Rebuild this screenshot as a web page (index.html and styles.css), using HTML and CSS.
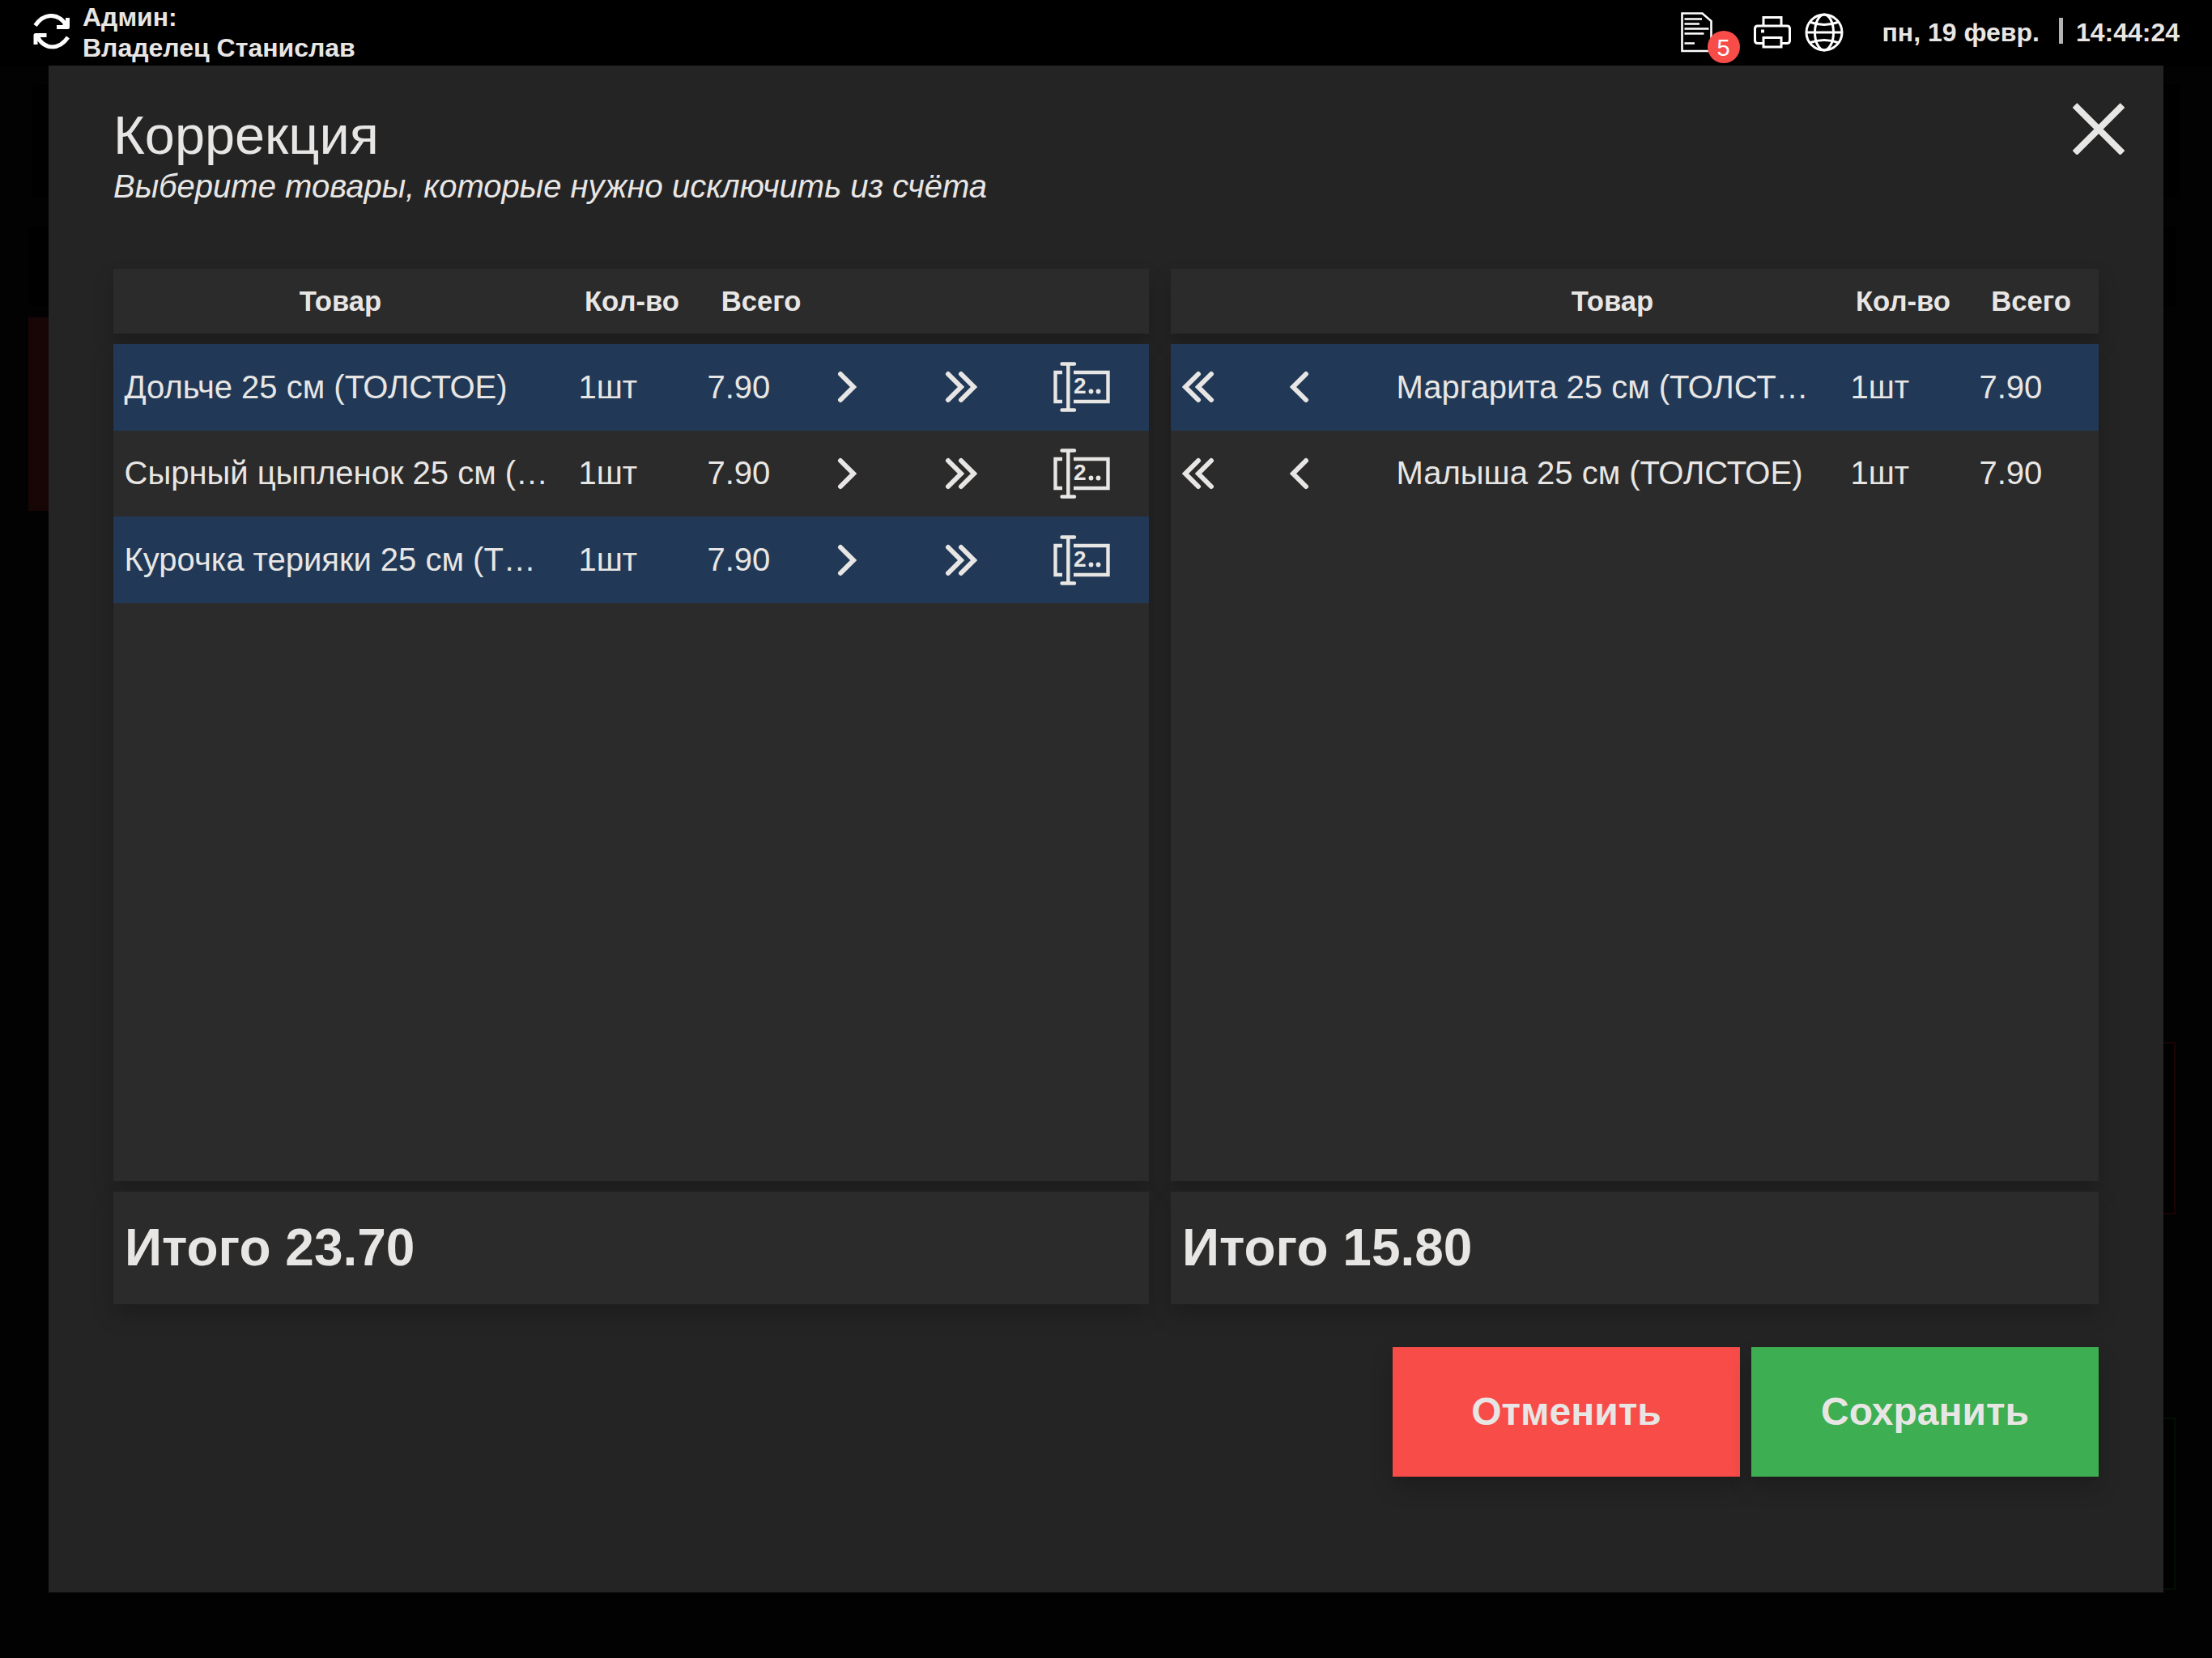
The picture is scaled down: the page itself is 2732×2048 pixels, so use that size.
FILE: index.html
```html
<!DOCTYPE html>
<html lang="ru">
<head>
  <meta charset="UTF-8">
  <meta name="viewport" content="width=device-width, initial-scale=1.0">
  <title>Коррекция</title>
  <link rel="stylesheet" href="styles.css">
</head>
<body>
  <svg class="sprite">
    <symbol id="next" viewBox="0 0 24 40"><path d="M4 4 L20 20 L4 36"/></symbol>
    <symbol id="nextAll" viewBox="0 0 40 40"><path d="M4 4 L20 20 L4 36 M20 4 L36 20 L20 36"/></symbol>
    <symbol id="prev" viewBox="0 0 24 40"><path d="M20 4 L4 20 L20 36"/></symbol>
    <symbol id="prevAll" viewBox="0 0 40 40"><path d="M20 4 L4 20 L20 36 M36 4 L20 20 L36 36"/></symbol>
    <symbol id="edit" viewBox="0 0 72 64">
      <path d="M12 14 H3.5 V50 H12 M26 14 H68.5 V50 H26" stroke-width="4.4" stroke-linecap="butt"/>
      <path d="M11.5 3.5 H27 M11.5 60.5 H27 M19.3 3.5 V60.5" stroke-width="4.4"/>
      <text x="26" y="40">2</text>
      <circle cx="47.5" cy="37.5" r="2.9"/>
      <circle cx="56.5" cy="37.5" r="2.9"/>
    </symbol>
  </svg>

  <header class="topbar">
    <svg class="sync" viewBox="0 0 46 44">
      <path d="M3.5 14.5 C14 -1 31 -2 42 14 M44 29 C33 45 15 45 6 28"/>
      <path d="M43.5 5 V16.5 H30 M4 38 V26.5 H17.5"/>
      <path class="fill" d="M35 16 L43 8 V16 Z M4 27 H12 L4 35 Z"/>
    </svg>
    <div class="user">Админ:<br>Владелец Станислав</div>
    <div class="status">
      <div class="docs">
        <svg viewBox="0 0 40 50">
          <path d="M1.5 1.5 H26.5 L37.5 11 V48 H1.5 Z" stroke-width="2.6"/>
          <path d="M4.5 8.5 H26 M4.5 14.5 H23 M4.5 20.5 H34.5 M4.5 26.5 H28.5 M4.5 38.5 H17" stroke-width="2.6"/>
        </svg>
        <span class="badge">5</span>
      </div>
      <svg class="printer" viewBox="0 0 46 40">
        <path d="M12 12 V1.5 H34 V12 M12 33.5 H5 Q1.5 33.5 1.5 30 V15.5 Q1.5 12 5 12 H41 Q44.5 12 44.5 15.5 V30 Q44.5 33.5 41 33.5 H34 M12 26.5 H34 V38 H12 Z"/>
        <path d="M9 18.5 H13" stroke-width="4"/>
      </svg>
      <svg class="globe" viewBox="0 0 48 48">
        <circle cx="24" cy="24" r="22"/>
        <ellipse cx="24" cy="24" rx="11.5" ry="22"/>
        <path d="M2 24 H46 M5.5 11 Q24 18 42.5 11 M5.5 37 Q24 30 42.5 37"/>
      </svg>
      <span class="date">пн, 19 февр.</span>
      <span class="divider"></span>
      <span class="time">14:44:24</span>
    </div>
  </header>

  <main class="screen">
    <div class="side side-left">
      <div class="block-field"></div>
      <div class="block-tab"></div>
      <div class="block-red"></div>
    </div>

    <section class="modal">
      <div class="modal-head">
        <div>
          <h1>Коррекция</h1>
          <p>Выберите товары, которые нужно исключить из счёта</p>
        </div>
        <svg class="close" viewBox="0 0 64 64"><path d="M2.5 3 L61.5 62 M61.5 3 L2.5 62"/></svg>
      </div>

      <div class="tables">
        <div class="table table-from">
          <div class="row thead">
            <span>Товар</span><span>Кол-во</span><span>Всего</span>
          </div>
          <div class="tbody">
            <div class="row">
              <span class="name">Дольче 25 см (ТОЛСТОЕ)</span><span>1шт</span><span>7.90</span>
              <span><svg class="arrow"><use href="#next"/></svg></span>
              <span><svg class="arrow-all"><use href="#nextAll"/></svg></span>
              <span><svg class="edit"><use href="#edit"/></svg></span>
            </div>
            <div class="row">
              <span class="name">Сырный цыпленок 25 см (…</span><span>1шт</span><span>7.90</span>
              <span><svg class="arrow"><use href="#next"/></svg></span>
              <span><svg class="arrow-all"><use href="#nextAll"/></svg></span>
              <span><svg class="edit"><use href="#edit"/></svg></span>
            </div>
            <div class="row">
              <span class="name">Курочка терияки 25 см (Т…</span><span>1шт</span><span>7.90</span>
              <span><svg class="arrow"><use href="#next"/></svg></span>
              <span><svg class="arrow-all"><use href="#nextAll"/></svg></span>
              <span><svg class="edit"><use href="#edit"/></svg></span>
            </div>
          </div>
          <div class="total">Итого 23.70</div>
        </div>

        <div class="table table-to">
          <div class="row thead">
            <span></span><span></span><span>Товар</span><span>Кол-во</span><span>Всего</span>
          </div>
          <div class="tbody">
            <div class="row">
              <span><svg class="arrow-all"><use href="#prevAll"/></svg></span>
              <span><svg class="arrow"><use href="#prev"/></svg></span>
              <span class="name">Маргарита 25 см (ТОЛСТ…</span><span>1шт</span><span>7.90</span>
            </div>
            <div class="row">
              <span><svg class="arrow-all"><use href="#prevAll"/></svg></span>
              <span><svg class="arrow"><use href="#prev"/></svg></span>
              <span class="name">Малыша 25 см (ТОЛСТОЕ)</span><span>1шт</span><span>7.90</span>
            </div>
          </div>
          <div class="total">Итого 15.80</div>
        </div>
      </div>

      <div class="buttons">
        <button class="cancel">Отменить</button>
        <button class="save">Сохранить</button>
      </div>
    </section>

    <div class="side side-right">
      <div class="block-field"></div>
      <div class="block-tab"></div>
      <div class="frame frame-red"></div>
      <div class="frame frame-green"></div>
    </div>
  </main>
</body>
</html>
```
FILE: styles.css
```css
* {
  box-sizing: border-box;
}
body {
  margin: 0;
  height: 2048px;
  overflow: hidden;
  background: #020202;
  color: #e8e6e4;
  font-family: "Liberation Sans", Arial, sans-serif;
}
svg {
  display: block;
  fill: none;
  stroke: #fff;
  stroke-width: 3;
}
.sprite {
  display: none;
}

/* top bar */
.topbar {
  display: flex;
  height: 81px;
  padding: 0 40px;
  background: #000;
  font-size: 32px;
  font-weight: bold;
}
.sync {
  width: 46px;
  height: 44px;
  margin-top: 17px;
  stroke-width: 5;
  stroke-linejoin: round;
}
.sync .fill {
  fill: #fff;
  stroke: none;
}
.user {
  margin: 2px 0 0 16px;
  line-height: 38px;
}
.status {
  display: flex;
  align-items: center;
  margin-left: auto;
}
.docs {
  position: relative;
  width: 40px;
  height: 50px;
  margin: 0 50px 2px 0;
}
.badge {
  position: absolute;
  left: 33px;
  top: 23px;
  width: 40px;
  height: 40px;
  border-radius: 50%;
  background: #f84c48;
  color: #fff;
  font-size: 29px;
  font-weight: normal;
  line-height: 42px;
  text-align: center;
}
.printer {
  width: 46px;
  height: 40px;
  margin: 0 17px 2px 0;
}
.globe {
  width: 48px;
  height: 48px;
  margin: 0 48px 1px 0;
}
.divider {
  width: 5px;
  height: 32px;
  margin: 0 16px 5px 24px;
  background: #b3b3b3;
}

/* dimmed screen with the modal over it */
.screen {
  display: grid;
  grid-template-columns: 60px 2612px 60px;
  height: 1886px;
}
.side-left {
  padding: 23px 0 0 35px;
}
.side-right {
  padding: 23px 45px 0 0;
}
.block-field {
  height: 141px;
  background: #000;
}
.side-left .block-field {
  margin-left: 5px;
}
.side-right .block-field {
  margin-right: -5px;
}
.block-tab {
  height: 98px;
  margin-top: 35px;
  background: #000;
}
.block-red {
  height: 239px;
  margin-top: 14px;
  background: #170605;
}
.frame {
  height: 213px;
  border: 2px solid;
  border-left: none;
  background: #000;
}
.frame-red {
  margin-top: 909px;
  border-color: #1a0504;
}
.frame-green {
  margin-top: 251px;
  border-color: #030e05;
}

.modal {
  padding: 43px 80px 0;
  background: #242424;
}
.modal-head {
  display: flex;
  justify-content: space-between;
  height: 208px;
}
.modal-head h1 {
  margin: 0;
  font-size: 66.67px;
  font-weight: normal;
  line-height: 86px;
}
.modal-head p {
  margin: 0;
  font-size: 40px;
  font-style: italic;
  line-height: 40px;
}
.close {
  width: 64px;
  height: 64px;
  margin: 3px -32px 0 0;
  stroke: #e8e6e4;
  stroke-width: 8;
}

/* tables */
.tables {
  display: flex;
  gap: 27px;
}
.table {
  display: flex;
  flex-direction: column;
  gap: 13px;
}
.table-from {
  width: 1279px;
}
.table-to {
  width: 1146px;
}
.thead, .tbody, .total, .buttons button {
  box-shadow: 0 13px 27px rgba(0,0,0,0.2);
}
.thead, .tbody, .total {
  background: #2b2b2b;
}
.row {
  display: grid;
  align-items: center;
}
.table-from .row {
  grid-template-columns: 561px 159px 160px 133px 133px 133px;
}
.table-to .row {
  grid-template-columns: 133px 132px 561px 159px 161px;
}
.row.thead {
  height: 80px;
  font-size: 34.67px;
  font-weight: bold;
  text-align: center;
}
.table-to .thead {
  padding-right: 4px;
}
.table-to .row.thead {
  grid-template-columns: 133px 132px 561px 157px 159px;
}
.tbody {
  height: 1034px;
}
.tbody .row {
  height: 106.67px;
  font-size: 40px;
}
.tbody .row:nth-child(odd) {
  background: #213957;
}
.tbody .row span {
  padding: 0 13.5px;
}
.tbody .row .name {
  overflow: hidden;
  white-space: nowrap;
  text-overflow: ellipsis;
}
.tbody svg {
  height: 40px;
  stroke: #e8e6e4;
  stroke-width: 6;
  stroke-linecap: round;
}
.tbody .arrow {
  width: 24px;
}
.tbody .arrow-all {
  width: 40px;
}
.tbody .edit {
  width: 72px;
  height: 64px;
}
#edit text, #edit circle {
  fill: #e8e6e4;
  stroke: none;
}
#edit text {
  font-size: 28px;
  font-weight: bold;
}
.total {
  height: 139px;
  padding-left: 14px;
  font-size: 64px;
  font-weight: bold;
  line-height: 139px;
}

.buttons {
  display: flex;
  justify-content: flex-end;
  gap: 14px;
  margin-top: 53px;
}
.buttons button {
  width: 429px;
  height: 160px;
  padding: 0 0 2px;
  border: none;
  color: #e8e6e4;
  font-family: inherit;
  font-size: 48px;
  font-weight: bold;
}
.cancel {
  background: #f84c48;
}
.save {
  background: #3dae51;
}
```
